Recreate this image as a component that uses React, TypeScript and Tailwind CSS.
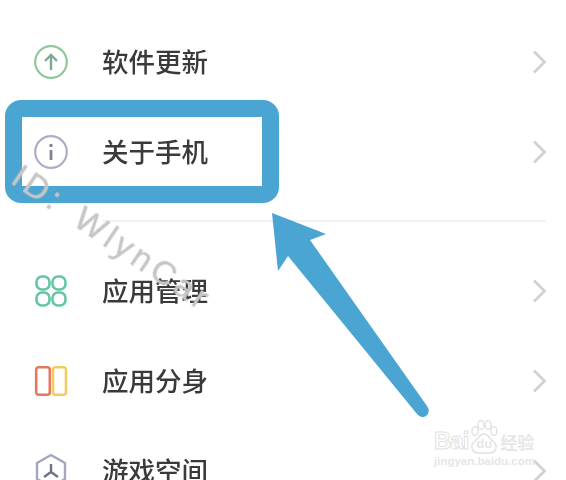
import { ReactNode } from 'react';

const UpdateIcon = () => (
    <svg width="36" height="36" viewBox="0 0 36 36" fill="none">
        <circle cx="18" cy="18" r="15.800" stroke="#8fc79a" strokeWidth="2.200" />
        <path d="M18 26V11M12 17 18 11 24 17" stroke="#7fa895" strokeWidth="2.400" />
    </svg>
);

const InfoIcon = () => (
    <svg width="36" height="36" viewBox="0 0 36 36" fill="none">
        <circle cx="18" cy="18" r="15.800" stroke="#a9aec6" strokeWidth="2.200" />
        <path d="M18 16v10" stroke="#7d8296" strokeWidth="2.800" />
        <circle cx="18" cy="11.500" r="1.700" fill="#7d8296" />
    </svg>
);

const AppsIcon = () => (
    <svg width="34" height="34" viewBox="0 0 34 34" fill="none" stroke="#62c6a6" strokeWidth="2.600">
        <rect x="2.500" y="2.500" width="13" height="13" rx="5.500" />
        <rect x="18.500" y="2.500" width="13" height="13" rx="5.500" />
        <rect x="2.500" y="18.500" width="13" height="13" rx="5.500" />
        <rect x="18.500" y="18.500" width="13" height="13" rx="5.500" />
    </svg>
);

const CloneIcon = () => (
    <svg width="34" height="34" viewBox="0 0 34 34" fill="none" strokeWidth="2.600">
        <rect x="2.200" y="3.200" width="13.600" height="27.600" rx="2.500" stroke="#e4795d" />
        <rect x="19" y="3.200" width="13" height="27.600" rx="2.500" stroke="#f0cc62" />
    </svg>
);

const GameIcon = () => (
    <svg width="34" height="36" viewBox="0 0 34 36" fill="none" strokeWidth="2.400">
        <path d="M17 2 31 10v16l-14 8-14-8V10z" stroke="#a3a7bd" strokeLinejoin="round" />
        <path d="M17 11v8M17 19l-7 5M17 19l7 5" stroke="#6f7388" />
    </svg>
);

const Chevron = () => (
    <svg width="16" height="26" viewBox="0 0 16 26" fill="none">
        <path d="M4 2.500 14.500 13 4 23.500" stroke="#d2d2d2" strokeWidth="2.800" />
    </svg>
);

const rows: { icon: ReactNode; label: string }[] = [
    { icon: <UpdateIcon />, label: '软件更新' },
    { icon: <InfoIcon />, label: '关于手机' },
];

const rows2: { icon: ReactNode; label: string }[] = [
    { icon: <AppsIcon />, label: '应用管理' },
    { icon: <CloneIcon />, label: '应用分身' },
    { icon: <GameIcon />, label: '游戏空间' },
];

const Row = ({ icon, label }: { icon: ReactNode; label: string }) => (
    <div className="flex h-[90px] items-center pr-[20px] pl-[33px]">
        <div className="flex w-[36px] justify-center">{icon}</div>
        <span className="ml-[33px] flex-1 pb-[2px] text-[26.500px] leading-none font-medium text-[#3a3a3a]">{label}</span>
        <Chevron />
    </div>
);

const BaiduMark = () => (
    <div className="absolute top-[418px] left-[434px] h-[48px] w-[110px] font-['Liberation_Sans',sans-serif] text-[#e6e6e6]">
        <div className="flex h-[36px] items-end whitespace-nowrap">
            <span className="text-[24px] leading-[26px] font-bold tracking-[-1px] text-white [-webkit-text-stroke:1px_#e2e2e2]">
                Bai
            </span>
            <div className="relative ml-[1px] h-[34px] w-[30px] shrink-0">
                <svg width="30" height="34" viewBox="0 0 30 34" fill="none" stroke="#e2e2e2" strokeWidth="1.500">
                    <ellipse cx="6" cy="11" rx="3" ry="4.500" />
                    <ellipse cx="12" cy="5" rx="3" ry="4.500" />
                    <ellipse cx="19" cy="5" rx="3" ry="4.500" />
                    <ellipse cx="25" cy="11" rx="3" ry="4.500" />
                    <path d="M15 14c-4 0-6 5-10 8-4 4-2 11 4 11h12c6 0 8-7 4-11-4-3-6-8-10-8z" />
                </svg>
                <span className="absolute top-[17px] left-[7px] text-[13px] leading-none font-bold">du</span>
            </div>
            <span className="ml-[1px] shrink-0 font-['Noto_Sans_CJK_SC',sans-serif] text-[17px] leading-[24px] font-bold">经验</span>
        </div>
        <div className="mt-[1px] text-[11.500px] leading-[12px] font-bold whitespace-nowrap">jingyan.baidu.com</div>
    </div>
);

export default function App() {
    return (
        <div className="relative h-[480px] w-[566px] overflow-hidden bg-white font-['Noto_Sans_CJK_SC','Liberation_Sans',sans-serif]">
            <div className="pt-[17px] blur-[0.6px]">
                {rows.map((r) => (
                    <Row key={r.label} {...r} />
                ))}
                <div className="mt-[23px] mr-[20px] mb-[24px] ml-[103px] h-[2px] bg-[#f1f1f1]" />
                {rows2.map((r) => (
                    <Row key={r.label} {...r} />
                ))}
            </div>

            {/* annotation box */}
            <div className="absolute top-[100px] left-[5px] h-[103px] w-[274px] rounded-[16px] border-[17px] border-[#4aa5d2]" />

            {/* arrow */}
            <svg className="absolute top-0 left-0" width="566" height="480" viewBox="0 0 566 480" fill="none">
                <path
                    d="M272 213 326 234 310 240 427 406Q431 412 426 416 421 419 417 414L288 256 278 271z"
                    fill="#4aa5d2"
                />
            </svg>

            {/* watermarks */}
            <span className="absolute top-[159px] left-[25px] origin-top-left rotate-[34deg] font-['Liberation_Sans',sans-serif] text-[33px] leading-none tracking-[4.500px] [word-spacing:6px] whitespace-nowrap text-[#c6c6c6] blur-[0.4px] [-webkit-text-stroke:0.5px_#c6c6c6]">
                ID: WlynCar
            </span>
            <BaiduMark />
        </div>
    );
}
